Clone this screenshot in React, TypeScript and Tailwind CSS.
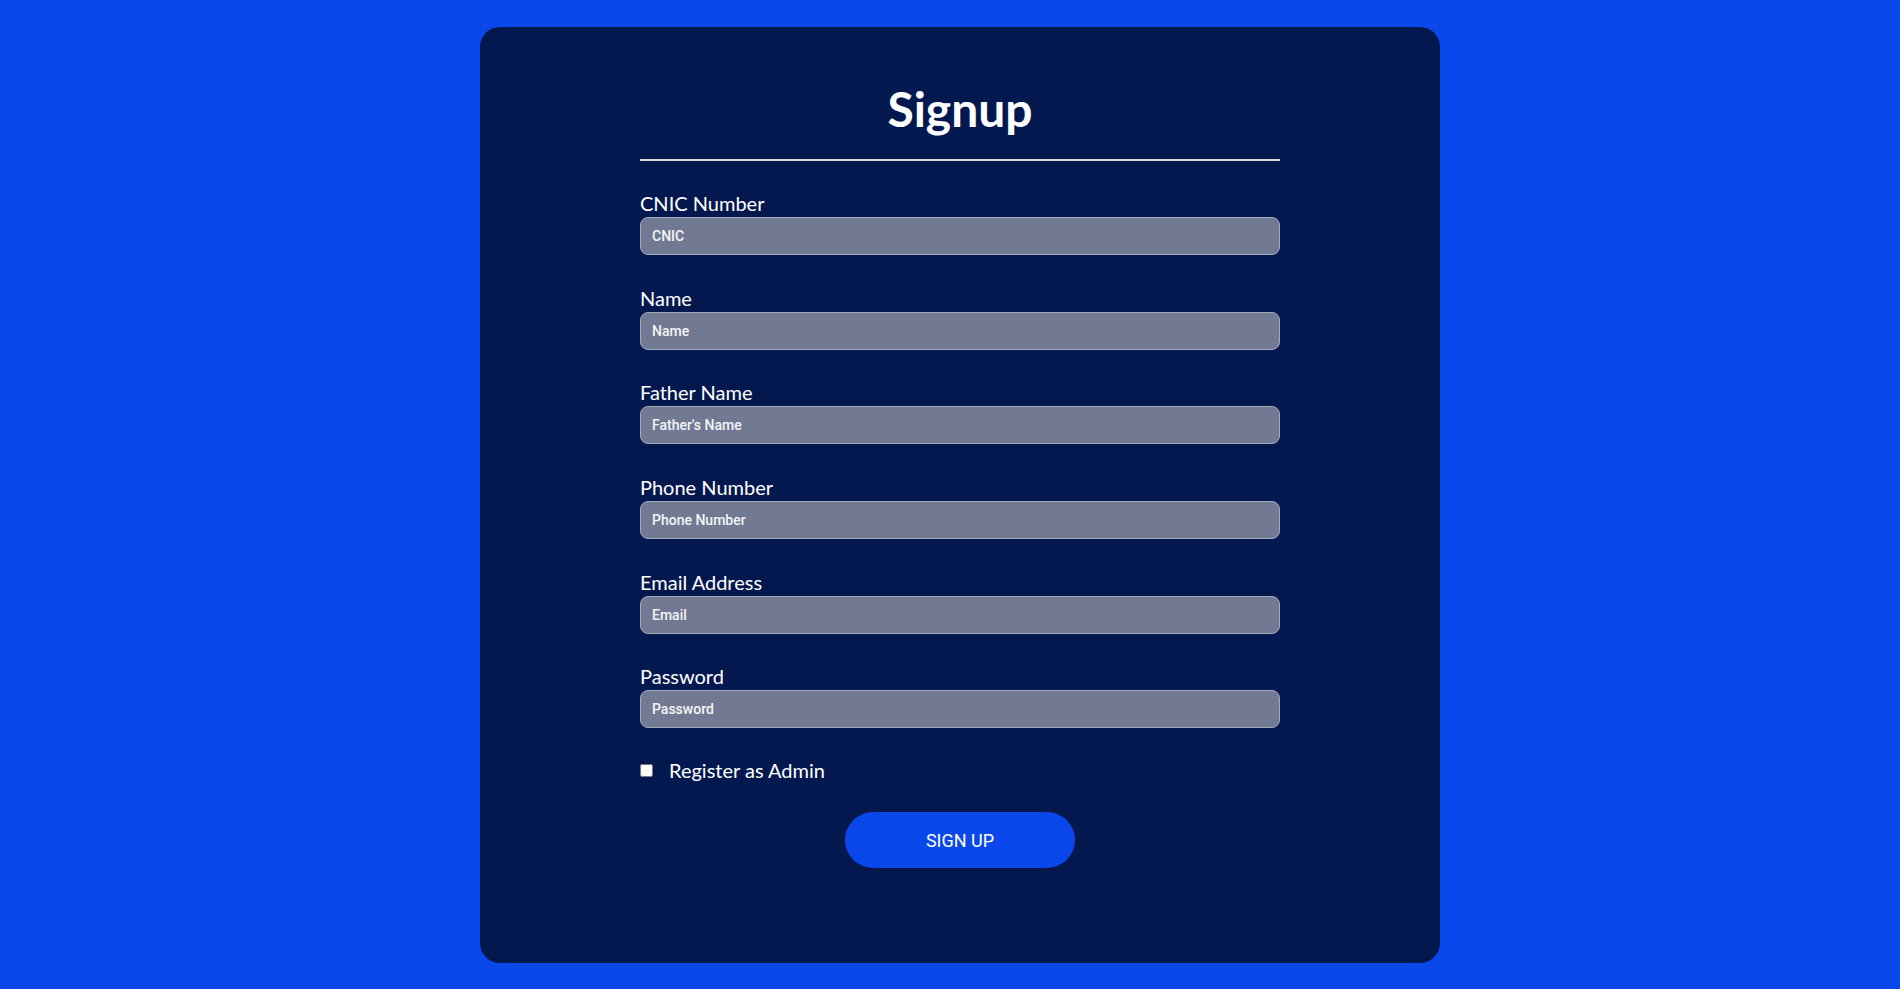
import React, { useState } from 'react';

const fields = [
  { label: 'CNIC Number', placeholder: 'CNIC', type: 'text' },
  { label: 'Name', placeholder: 'Name', type: 'text' },
  { label: 'Father Name', placeholder: "Father's Name", type: 'text' },
  { label: 'Phone Number', placeholder: 'Phone Number', type: 'tel' },
  { label: 'Email Address', placeholder: 'Email', type: 'email' },
  { label: 'Password', placeholder: 'Password', type: 'password' },
];

export default function App() {
  const [isAdmin, setIsAdmin] = useState(false);

  return (
    <div className="h-screen overflow-hidden bg-[#0a48eb] pt-[27px] pl-[480px] font-['Lato',sans-serif]">
      <div className="w-[960px] h-[936px] rounded-[20px] bg-[#041850] pt-[54px]">
        <form className="mx-auto w-[640px] flex flex-col" onSubmit={(e) => e.preventDefault()}>
          {/* Heading */}
          <h1 className="text-center text-[48px] leading-[56px] font-bold text-white">Signup</h1>
          <div className="mt-[22px] h-[2px] w-full bg-[#d9d9d9]" />

          {/* Inputs */}
          <div className="mt-[28px] flex flex-col">
            {fields.map((f) => (
              <div key={f.label} className="flex flex-col mb-[28.7px]">
                <label className="text-[20px] leading-[28px] text-white">{f.label}</label>
                <input
                  type={f.type}
                  placeholder={f.placeholder}
                  className="h-[38px] w-full rounded-[8px] border border-[#a3a9bb] bg-[#727a93] px-[11px] text-[14px] font-medium text-white placeholder:text-[#f4f4f6] font-['Roboto',sans-serif] outline-none"
                />
              </div>
            ))}
          </div>

          {/* Admin checkbox */}
          <div className="-mt-[1px] flex items-center h-[28px]">
            <input
              type="checkbox"
              checked={isAdmin}
              onChange={(e) => setIsAdmin(e.target.checked)}
              className="m-0 h-[13px] w-[13px]"
            />
            <span className="ml-[16px] text-[20px] leading-[28px] text-white">Register as Admin</span>
          </div>

          {/* Submit */}
          <button
            type="submit"
            className="mx-auto mt-[28px] h-[56px] w-[230px] rounded-full bg-[#0a48eb] text-[18px] text-white font-['Roboto',sans-serif]"
          >
            SIGN UP
          </button>
        </form>
      </div>
    </div>
  );
}
